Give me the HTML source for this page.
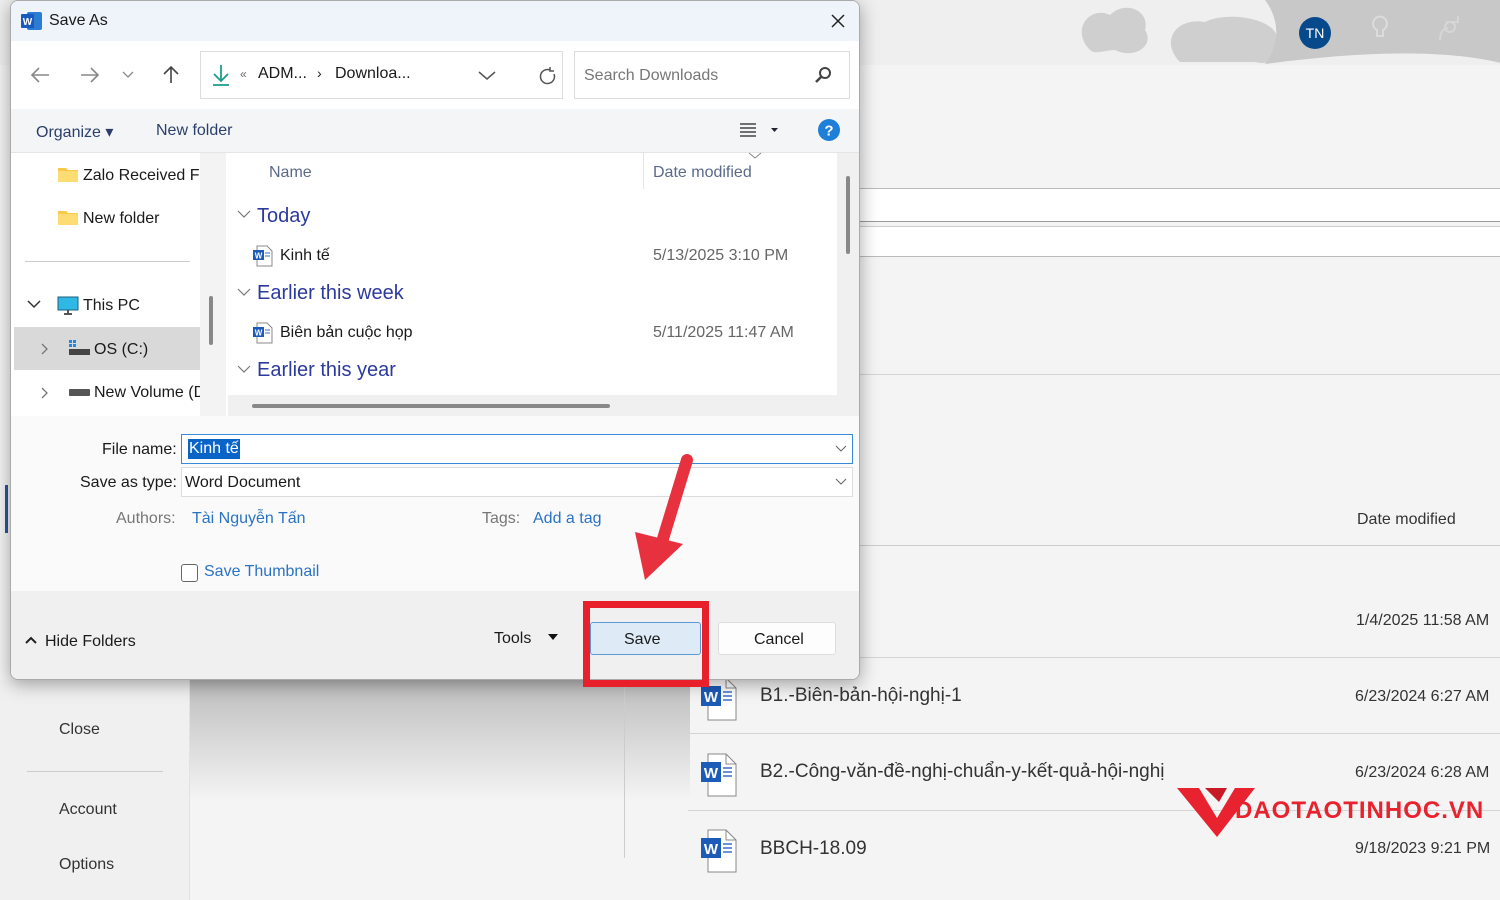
<!DOCTYPE html>
<html><head><meta charset="utf-8"><style>
*{margin:0;padding:0;box-sizing:border-box}
body{width:1500px;height:900px;overflow:hidden;background:#f4f4f4;font-family:"Liberation Sans","Noto Sans CJK SC",sans-serif;position:relative;color:#1a1a1a}
.a{position:absolute;white-space:nowrap}
.hl{position:absolute;height:1px;background:#d4d4d4}
.blue{color:#2b3a9e}
.lnk{color:#2a73c4}
</style></head><body>
<!-- background app -->
<div class="a" style="left:0;top:0;width:1500px;height:65px;background:#efefef"></div>
<svg class="a" style="left:1040px;top:0" width="460" height="66"><g fill="#cfcfcf"><path d="M50 50c-20-20 0-45 20-35 15-15 40-5 35 15 10 15-10 30-30 20-10 0-20 5-25 0z"/><path d="M140 62c-20-20-5-45 25-40 20-10 60-5 70 10 10 20 0 35-20 30z"/></g><path d="M225 0h240v64c-60-16-150-12-240 0 15-20 15-44 0-64z" fill="#c8c8c8"/><circle cx="275" cy="33" r="16" fill="#074a8c"/><text x="275" y="38" font-size="14" fill="#fff" text-anchor="middle" font-family="Liberation Sans">TN</text><path d="M333 24a7 7 0 1 1 10 6v6h-6v-6a7 7 0 0 1-4-6z" fill="none" stroke="#dcdcdc" stroke-width="2"/><path d="M400 40c0-8 4-12 8-12M410 22a5 5 0 1 0 0.1 0M406 22h12v-6" fill="none" stroke="#d6d6d6" stroke-width="2"/></svg>
<div class="a" style="left:860px;top:188px;width:640px;height:34px;background:#fff;border-top:1px solid #bbb;border-bottom:1px solid #999"></div>
<div class="a" style="left:860px;top:226px;width:640px;height:31px;background:#fff;border-top:1px solid #ccc;border-bottom:1px solid #bbb"></div>
<div class="hl" style="left:860px;top:374px;width:640px"></div>
<div class="hl" style="left:860px;top:545px;width:640px;background:#ccc"></div>
<div class="a" style="left:1357px;top:511px;font-size:16px;color:#333">Date modified</div>
<div class="a" style="left:1356px;top:612px;font-size:16px;color:#333">1/4/2025 11:58 AM</div>
<div class="hl" style="left:688px;top:657px;width:812px"></div>
<div class="hl" style="left:688px;top:733px;width:812px"></div>
<div class="hl" style="left:688px;top:810px;width:812px"></div>
<div class="a" style="left:0;top:680px;width:190px;height:220px;background:#f0f0f0;border-right:1px solid #e2e2e2"></div>
<div class="a" style="left:190px;top:680px;width:500px;height:120px;background:linear-gradient(#bdbdbd,#f4f4f4)"></div>
<div class="a" style="left:624px;top:680px;width:1px;height:178px;background:#ccc"></div>
<div class="a" style="left:59px;top:721px;font-size:16px;color:#333">Close</div>
<div class="a" style="left:27px;top:771px;width:136px;height:1px;background:#ccc"></div>
<div class="a" style="left:59px;top:801px;font-size:16px;color:#333">Account</div>
<div class="a" style="left:59px;top:856px;font-size:16px;color:#333">Options</div>
<div class="a" style="left:5px;top:485px;width:3px;height:48px;background:#2b579a"></div>
<!-- word icons -->
<svg class="a" style="left:700px;top:677px" width="38" height="44"><path d="M8 1h18l10 10v32H8z" fill="#fff" stroke="#888"/><path d="M26 1v10h10" fill="none" stroke="#888"/><rect x="1" y="9" width="20" height="20" fill="#1d5bb8"/><text x="11" y="25" font-size="15" font-weight="bold" fill="#fff" text-anchor="middle" font-family="Liberation Sans">W</text><path d="M23 15h9M23 19h9M23 23h9" stroke="#3a6fc8" stroke-width="1.5"/></svg>
<svg class="a" style="left:700px;top:753px" width="38" height="44"><path d="M8 1h18l10 10v32H8z" fill="#fff" stroke="#888"/><path d="M26 1v10h10" fill="none" stroke="#888"/><rect x="1" y="9" width="20" height="20" fill="#1d5bb8"/><text x="11" y="25" font-size="15" font-weight="bold" fill="#fff" text-anchor="middle" font-family="Liberation Sans">W</text><path d="M23 15h9M23 19h9M23 23h9" stroke="#3a6fc8" stroke-width="1.5"/></svg>
<svg class="a" style="left:700px;top:829px" width="38" height="44"><path d="M8 1h18l10 10v32H8z" fill="#fff" stroke="#888"/><path d="M26 1v10h10" fill="none" stroke="#888"/><rect x="1" y="9" width="20" height="20" fill="#1d5bb8"/><text x="11" y="25" font-size="15" font-weight="bold" fill="#fff" text-anchor="middle" font-family="Liberation Sans">W</text><path d="M23 15h9M23 19h9M23 23h9" stroke="#3a6fc8" stroke-width="1.5"/></svg>
<div class="a" style="left:760px;top:685px;font-size:19px;color:#333">B1.-Biên-bản-hội-nghị-1</div>
<div class="a" style="left:760px;top:761px;font-size:19px;color:#333">B2.-Công-văn-đề-nghị-chuẩn-y-kết-quả-hội-nghị</div>
<div class="a" style="left:760px;top:838px;font-size:19px;color:#333">BBCH-18.09</div>
<div class="a" style="left:1355px;top:688px;font-size:16px;color:#333">6/23/2024 6:27 AM</div>
<div class="a" style="left:1355px;top:764px;font-size:16px;color:#333">6/23/2024 6:28 AM</div>
<div class="a" style="left:1355px;top:840px;font-size:16px;color:#333">9/18/2023 9:21 PM</div>
<!-- logo -->
<svg class="a" style="left:1175px;top:785px" width="325" height="55"><path d="M2 3h22l18 30 L60 3h20L42 52z" fill="#e8222e"/><path d="M30 3h22l-8 14z" fill="#c81a25"/><text x="60" y="33" font-size="24" font-weight="bold" fill="#e8222e" font-family="Liberation Sans" letter-spacing="1">DAOTAOTINHOC.VN</text></svg>
<!-- dialog -->
<div class="a" style="left:10px;top:0;width:850px;height:680px;background:#fff;border:1px solid #aaa;border-radius:8px;box-shadow:0 4px 18px rgba(0,0,0,.35);overflow:hidden">
 <div class="a" style="left:0;top:0;width:850px;height:40px;background:#eef4f9"></div>
 <svg class="a" style="left:10px;top:10px" width="22" height="20"><rect x="6" y="1" width="15" height="18" rx="2" fill="#2b7cd3"/><rect x="0" y="3" width="13" height="14" rx="1" fill="#185abd"/><text x="6.5" y="14" font-size="10" font-weight="bold" fill="#fff" text-anchor="middle" font-family="Liberation Sans">W</text></svg>
 <div class="a" style="left:38px;top:11px;font-size:16px">Save As</div>
 <svg class="a" style="left:819px;top:12px" width="16" height="16"><path d="M2 2l12 12M14 2L2 14" stroke="#222" stroke-width="1.5"/></svg>
 <svg class="a" style="left:18px;top:62px" width="160" height="24" fill="none" stroke="#888" stroke-width="1.6"><path d="M20 12H4M10 5l-7 7 7 7"/><path d="M52 12h16M62 5l7 7-7 7"/><path d="M94 9l5 5 5-5" stroke-width="1.3"/><path d="M142 20V4M135 11l7-7 7 7" stroke="#444"/></svg>
 <div class="a" style="left:189px;top:50px;width:363px;height:48px;border:1px solid #ddd"></div>
 <svg class="a" style="left:200px;top:62px" width="20" height="24"><path d="M10 2v16M3 11l7 7 7-7M2 22h16" fill="none" stroke="#1a9e8c" stroke-width="1.8"/></svg>
 <div class="a" style="left:229px;top:66px;font-size:12px;color:#666">«</div>
 <div class="a" style="left:247px;top:64px;font-size:16px">ADM...</div>
 <div class="a" style="left:306px;top:64px;font-size:14px">›</div>
 <div class="a" style="left:324px;top:64px;font-size:16px">Downloa...</div>
 <svg class="a" style="left:466px;top:66px" width="90" height="18" fill="none" stroke="#555" stroke-width="1.5"><path d="M2 5l8 7 8-7"/><path d="M73 3a7 7 0 1 0 4 4M73 0v4h4" /></svg>
 <div class="a" style="left:563px;top:50px;width:276px;height:48px;border:1px solid #ddd"></div>
 <div class="a" style="left:573px;top:66px;font-size:16px;color:#777">Search Downloads</div>
 <svg class="a" style="left:803px;top:65px" width="18" height="18"><circle cx="11" cy="7" r="5" fill="none" stroke="#444" stroke-width="2"/><path d="M7 11l-5 5" stroke="#444" stroke-width="2.5"/></svg>
 <div class="a" style="left:0;top:108px;width:850px;height:44px;background:#f3f5f7;border-bottom:1px solid #e5e5e5"></div>
 <div class="a" style="left:25px;top:121px;font-size:16px;color:#2b3f6a">Organize ▾</div>
 <div class="a" style="left:145px;top:121px;font-size:16px;color:#2b3f6a">New folder</div>
 <svg class="a" style="left:728px;top:121px" width="44" height="16"><path d="M1 2h16M1 6h16M1 10h16M1 14h16" stroke="#222" stroke-width="1.3"/><path d="M32 6h7l-3.5 4z" fill="#223"/></svg>
 <svg class="a" style="left:806px;top:117px" width="24" height="24"><circle cx="12" cy="12" r="11" fill="#1e7fd8"/><text x="12" y="17.5" font-size="15" font-weight="bold" fill="#fff" text-anchor="middle" font-family="Liberation Sans">?</text></svg>
 <svg class="a" style="left:47px;top:164px" width="22" height="18"><path d="M0 3h8l2 2h10v12H0z" fill="#f7c94a"/><path d="M0 6h20v11H0z" fill="#fddc73"/></svg>
 <div class="a" style="left:72px;top:166px;font-size:16px;width:117px;overflow:hidden">Zalo Received Files</div>
 <svg class="a" style="left:47px;top:207px" width="22" height="18"><path d="M0 3h8l2 2h10v12H0z" fill="#f7c94a"/><path d="M0 6h20v11H0z" fill="#fddc73"/></svg>
 <div class="a" style="left:72px;top:209px;font-size:16px">New folder</div>
 <div class="a" style="left:14px;top:260px;width:165px;height:1px;background:#ccc"></div>
 <svg class="a" style="left:16px;top:298px" width="14" height="10"><path d="M1 2l6 6 6-6" fill="none" stroke="#333" stroke-width="1.5"/></svg>
 <svg class="a" style="left:46px;top:295px" width="22" height="20"><rect x="1" y="1" width="20" height="13" fill="#2fb8e6" stroke="#1c5f7c"/><path d="M7 18h8M11 14v4" stroke="#555" stroke-width="2"/></svg>
 <div class="a" style="left:72px;top:296px;font-size:16px">This PC</div>
 <div class="a" style="left:3px;top:326px;width:186px;height:43px;background:#d9d9d9"></div>
 <svg class="a" style="left:30px;top:342px" width="8" height="12"><path d="M1 1l5 5-5 5" fill="none" stroke="#777" stroke-width="1.3"/></svg>
 <svg class="a" style="left:57px;top:338px" width="24" height="18"><rect x="1" y="1" width="3" height="3" fill="#1e88e5"/><rect x="5" y="1" width="3" height="3" fill="#1e88e5"/><rect x="1" y="5" width="3" height="3" fill="#1e88e5"/><rect x="5" y="5" width="3" height="3" fill="#1e88e5"/><rect x="1" y="10" width="21" height="6" fill="#444"/></svg>
 <div class="a" style="left:83px;top:340px;font-size:16px">OS (C:)</div>
 <svg class="a" style="left:30px;top:386px" width="8" height="12"><path d="M1 1l5 5-5 5" fill="none" stroke="#777" stroke-width="1.3"/></svg>
 <svg class="a" style="left:57px;top:386px" width="24" height="12"><rect x="1" y="2" width="21" height="7" rx="1" fill="#555"/></svg>
 <div class="a" style="left:83px;top:383px;font-size:16px;width:106px;overflow:hidden">New Volume (D:)</div>
 <div class="a" style="left:189px;top:152px;width:26px;height:263px;background:#f3f3f3"></div>
 <div class="a" style="left:198px;top:295px;width:4px;height:49px;background:#888;border-radius:2px"></div>
 <div class="a" style="left:258px;top:163px;font-size:16px;color:#5a6a88">Name</div>
 <div class="a" style="left:632px;top:152px;width:1px;height:36px;background:#e5e5e5"></div>
 <svg class="a" style="left:737px;top:151px" width="14" height="8"><path d="M1 1l6 5 6-5" fill="none" stroke="#888"/></svg>
 <div class="a" style="left:642px;top:163px;font-size:16px;color:#5a6a88">Date modified</div>
 <svg class="a" style="left:226px;top:208px" width="14" height="10"><path d="M1 2l6 6 6-6" fill="none" stroke="#777" stroke-width="1.2"/></svg>
 <div class="a blue" style="left:246px;top:204px;font-size:20px">Today</div>
 <svg class="a" style="left:242px;top:244px" width="20" height="22"><path d="M4 1h10l5 5v15H4z" fill="#fff" stroke="#888"/><rect x="0" y="5" width="11" height="10" fill="#1d5bb8"/><text x="5.5" y="13.5" font-size="8" font-weight="bold" fill="#fff" text-anchor="middle" font-family="Liberation Sans">W</text><path d="M12 8h5M12 11h5" stroke="#3a6fc8"/></svg>
 <div class="a" style="left:269px;top:246px;font-size:16px">Kinh tế</div>
 <div class="a" style="left:642px;top:246px;font-size:16px;color:#666">5/13/2025 3:10 PM</div>
 <svg class="a" style="left:226px;top:286px" width="14" height="10"><path d="M1 2l6 6 6-6" fill="none" stroke="#777" stroke-width="1.2"/></svg>
 <div class="a blue" style="left:246px;top:281px;font-size:20px">Earlier this week</div>
 <svg class="a" style="left:242px;top:321px" width="20" height="22"><path d="M4 1h10l5 5v15H4z" fill="#fff" stroke="#888"/><rect x="0" y="5" width="11" height="10" fill="#1d5bb8"/><text x="5.5" y="13.5" font-size="8" font-weight="bold" fill="#fff" text-anchor="middle" font-family="Liberation Sans">W</text><path d="M12 8h5M12 11h5" stroke="#3a6fc8"/></svg>
 <div class="a" style="left:269px;top:323px;font-size:16px">Biên bản cuộc họp</div>
 <div class="a" style="left:642px;top:323px;font-size:16px;color:#666">5/11/2025 11:47 AM</div>
 <svg class="a" style="left:226px;top:363px" width="14" height="10"><path d="M1 2l6 6 6-6" fill="none" stroke="#777" stroke-width="1.2"/></svg>
 <div class="a blue" style="left:246px;top:358px;font-size:20px">Earlier this year</div>
 <div class="a" style="left:217px;top:394px;width:609px;height:21px;background:#f0f0f0"></div>
 <div class="a" style="left:241px;top:403px;width:358px;height:4px;background:#888;border-radius:2px"></div>
 <div class="a" style="left:826px;top:152px;width:24px;height:263px;background:#f0f0f0"></div>
 <div class="a" style="left:835px;top:175px;width:4px;height:78px;background:#888;border-radius:2px"></div>
 <div class="a" style="left:0;top:415px;width:850px;height:175px;background:#fafafa"></div>
 <div class="a" style="left:91px;top:440px;font-size:16px">File name:</div>
 <div class="a" style="left:170px;top:433px;width:672px;height:30px;background:#fff;border:1px solid #3a8ad8"></div>
 <div class="a" style="left:177px;top:438px;font-size:16px;background:#0a64c8;color:#fff;padding:1px 1px">Kinh tế</div>
 <svg class="a" style="left:824px;top:444px" width="12" height="8"><path d="M1 1l5 5 5-5" fill="none" stroke="#666"/></svg>
 <div class="a" style="left:69px;top:473px;font-size:16px">Save as type:</div>
 <div class="a" style="left:170px;top:466px;width:672px;height:30px;background:#fff;border:1px solid #ddd"></div>
 <div class="a" style="left:174px;top:473px;font-size:16px">Word Document</div>
 <svg class="a" style="left:824px;top:477px" width="12" height="8"><path d="M1 1l5 5 5-5" fill="none" stroke="#666"/></svg>
 <div class="a" style="left:105px;top:509px;font-size:16px;color:#777">Authors:</div>
 <div class="a lnk" style="left:181px;top:509px;font-size:16px">Tài Nguyễn Tấn</div>
 <div class="a" style="left:471px;top:509px;font-size:16px;color:#777">Tags:</div>
 <div class="a lnk" style="left:522px;top:509px;font-size:16px">Add a tag</div>
 <div class="a" style="left:170px;top:563px;width:17px;height:18px;border:1px solid #666;border-radius:3px;background:#fff"></div>
 <div class="a lnk" style="left:193px;top:562px;font-size:16px">Save Thumbnail</div>
 <div class="a" style="left:0;top:590px;width:850px;height:90px;background:#f0f0f0"></div>
 <svg class="a" style="left:14px;top:635px" width="12" height="9"><path d="M1 7l5-5 5 5" fill="none" stroke="#222" stroke-width="2"/></svg>
 <div class="a" style="left:34px;top:632px;font-size:16px">Hide Folders</div>
 <div class="a" style="left:483px;top:629px;font-size:16px">Tools</div>
 <svg class="a" style="left:537px;top:633px" width="10" height="7"><path d="M0 0h10l-5 6z" fill="#111"/></svg>
 <div class="a" style="left:579px;top:621px;width:111px;height:33px;background:#deebf7;border:1px solid #5b9bd5;border-radius:3px"></div>
 <div class="a" style="left:613px;top:630px;font-size:16px">Save</div>
 <div class="a" style="left:707px;top:621px;width:118px;height:33px;background:#fdfdfd;border:1px solid #ddd;border-radius:3px"></div>
 <div class="a" style="left:743px;top:630px;font-size:16px">Cancel</div>
</div>
<div class="a" style="left:583px;top:601px;width:126px;height:86px;border:7px solid #e8202c"></div>
<svg class="a" style="left:630px;top:450px" width="80" height="135"><path d="M57 10L32 92" stroke="#e8313f" stroke-width="12" stroke-linecap="round"/><path d="M5 82l48 12-38 36z" fill="#e8313f"/></svg>
</body></html>
